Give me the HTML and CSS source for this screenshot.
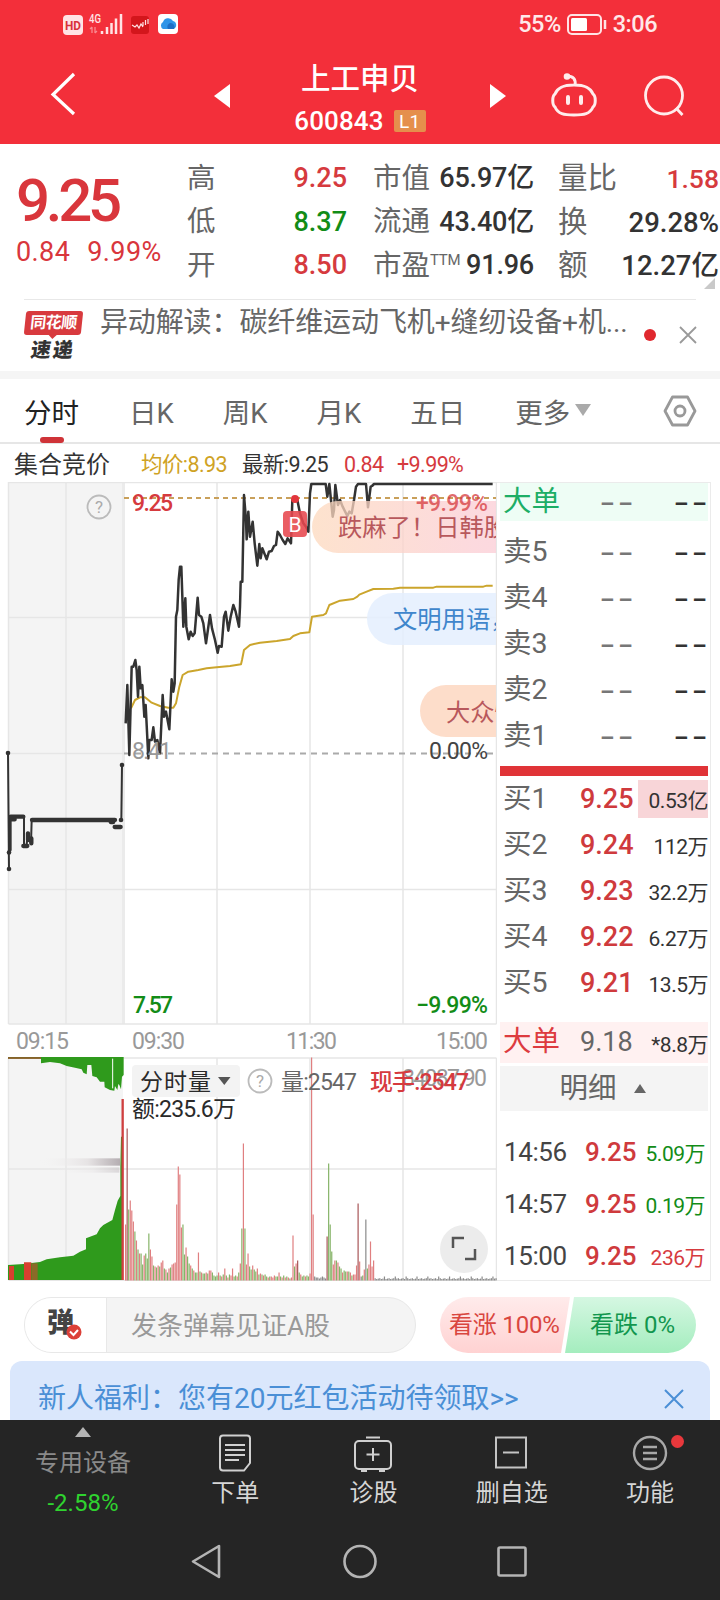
FILE: index.html
```html
<!DOCTYPE html>
<html lang="zh-CN">
<head>
    <meta charset="UTF-8">
    <meta name="viewport" content="width=device-width, initial-scale=1.0">
    <title>上工申贝 600843</title>
    <link rel="stylesheet" href="styles.css">
</head>
<body>
    <header class="top">
        <div class="status">
            <svg class="status-left" width="122" height="26" viewBox="60 11 122 26">
                <rect x="63" y="15" width="20" height="20" rx="4" fill="#ffe3e5"/>
                <text x="65" y="30" font-size="13" font-weight="700" fill="#d9303a" textLength="16" lengthAdjust="spacingAndGlyphs">HD</text>
                <text x="89" y="23" font-size="12" font-weight="500" fill="#ffe3e5" textLength="12" lengthAdjust="spacingAndGlyphs">4G</text>
                <path d="M92 27v6m-2-4l2-2m3 0v6m0 0l2-2" stroke="#f98a90" stroke-width="1.3" fill="none"/>
                <path d="M102 31v3M107 27v7M111.500 23v11M116 18.500v15.500M121 14v20" stroke="#ffe3e5" stroke-width="2.500"/>
                <rect x="131" y="16" width="18" height="18" rx="3" fill="#d3161c"/>
                <path d="M132 25l3 2 2-2 2 3 2-4 2 3M143 26v-4M145.500 25v-5M148 24v-5" stroke="#ffe3e5" stroke-width="1.200" fill="none"/>
                <rect x="158" y="14" width="20" height="20" rx="4" fill="#fff"/>
                <path d="M163 29a4 4 0 0 1 0-7 5.500 5.500 0 0 1 10-1 4.200 4.200 0 0 1 .5 8z" fill="#2f95e8"/>
                <path d="M168 29a4 4 0 0 1 2-6 4 4 0 0 1 4 6z" fill="#1d6fc6"/>
            </svg>
            <div class="status-right">
                <span>55%</span>
                <svg width="42" height="24" viewBox="0 0 42 24">
                    <rect x="2" y="2" width="33" height="19" rx="4" fill="none" stroke="#ffe3e5" stroke-width="2"/>
                    <rect x="5" y="5" width="16" height="13" rx="1.500" fill="#fff"/>
                    <path d="M39 7v9" stroke="#ffe3e5" stroke-width="2.500"/>
                </svg>
                <span>3:06</span>
            </div>
        </div>
        <div class="titlebar">
            <svg class="back" width="30" height="48" viewBox="0 0 30 48"><path d="M25 4L4 24.500 25 44" fill="none" stroke="#fff" stroke-width="3.200"/></svg>
            <svg class="prev" width="16" height="24" viewBox="0 0 16 24"><path d="M16 0v24L0 12z" fill="#fff"/></svg>
            <div class="stock">
                <h1>上工申贝</h1>
                <p>600843 <span class="level">L1</span></p>
            </div>
            <svg class="next" width="16" height="24" viewBox="0 0 16 24"><path d="M0 0v24l16-12z" fill="#fff"/></svg>
            <svg class="robot" width="50" height="48" viewBox="0 0 50 48" fill="none" stroke="#ffecec" stroke-width="3">
                <path d="M25 15c13 0 17 4 19 9 3 2 3 11 0 13-3 7-9 8-19 8s-16-1-19-8c-3-2-3-11 0-13 2-5 6-9 19-9zM26 15c1-6-2-9-8-9"/>
                <circle cx="18" cy="6.500" r="1.800" fill="#ffecec"/>
                <path d="M19 27v6M32 27v6" stroke-width="4" stroke-linecap="round"/>
            </svg>
            <svg class="search" width="44" height="48" viewBox="0 0 44 48" fill="none" stroke="#ffecec" stroke-width="2.800"><circle cx="22" cy="25.500" r="18.500"/><path d="M34 38l6.500 7"/></svg>
        </div>
    </header>

    <section class="quote">
        <div class="price">
            <strong>9.25</strong>
            <p><span>0.84</span><span>9.99%</span></p>
        </div>
        <dl class="col col-a">
            <div><dt>高</dt><dd class="up">9.25</dd></div>
            <div><dt>低</dt><dd class="down">8.37</dd></div>
            <div><dt>开</dt><dd class="up">8.50</dd></div>
        </dl>
        <dl class="col col-b">
            <div><dt>市值</dt><dd>65.97亿</dd></div>
            <div><dt>流通</dt><dd>43.40亿</dd></div>
            <div><dt>市盈<sup>TTM</sup></dt><dd>91.96</dd></div>
        </dl>
        <dl class="col col-c">
            <div><dt>量比</dt><dd class="up">1.58</dd></div>
            <div><dt>换</dt><dd>29.28%</dd></div>
            <div><dt>额</dt><dd>12.27亿</dd></div>
        </dl>
        <i class="corner"></i>
    </section>

    <section class="news">
        <div class="logo">
            <span class="logo-top">同花顺</span>
            <span class="logo-bottom">速递</span>
        </div>
        <p>异动解读：碳纤维运动飞机+缝纫设备+机...</p>
        <i class="dot"></i>
        <svg width="18" height="18" viewBox="0 0 18 18"><path d="M1 1l16 16M17 1L1 17" stroke="#999" stroke-width="1.800"/></svg>
    </section>

    <nav class="tabs">
        <a class="active">分时</a>
        <a>日K</a>
        <a>周K</a>
        <a>月K</a>
        <a>五日</a>
        <a class="more">更多<i></i></a>
        <svg width="34" height="34" viewBox="0 0 34 34" fill="none" stroke="#999" stroke-width="2.800"><path d="M9.500 3h15L32 17l-7.500 14h-15L2 17z" stroke-linejoin="round"/><circle cx="17" cy="17" r="5"/></svg>
    </nav>

    <div class="summary">
        <b>集合竞价</b>
        <span class="avg">均价:8.93</span>
        <span class="last">最新:9.25</span>
        <span class="up chg">0.84</span>
        <span class="up">+9.99%</span>
    </div>

    <main class="board">
        <svg class="chart" width="497" height="799" viewBox="0 482 497 799">
            <defs>
                <linearGradient id="warm"><stop offset="0" stop-color="#fdd9bd"/><stop offset=".7" stop-color="#fbcdd3"/><stop offset="1" stop-color="#fbc9d8"/></linearGradient>
                <linearGradient id="trail"><stop offset="0" stop-color="#f3f3f3" stop-opacity="0"/><stop offset=".6" stop-color="#e6e3e4"/><stop offset="1" stop-color="#b5aeb2"/></linearGradient>
                <clipPath id="plot"><rect x="0" y="482" width="496" height="799"/></clipPath>
            </defs>

            <!-- grid -->
            <rect x="8" y="482" width="115" height="542" fill="#f4f4f4"/>
            <rect x="8" y="1058" width="115" height="222" fill="#f4f4f4"/>
            <rect x="122" y="482" width="3" height="542" fill="#ebebeb"/>
            <path d="M8.500 482.500h488M8.500 617.500h488M8.500 753.500h115M8.500 889.500h488M8.500 1024h488M8.500 1058h488M8.500 1169h488M8.500 1280.500h488
                     M8.500 482v542M66 482v542M217 482v542M310 482v542M403 482v542M496.500 482v542
                     M8.500 1058v222M66 1058v222M217 1058v222M310 1058v222M403 1058v222M496.500 1058v222" stroke="#e6e6e6" stroke-width="1.500" fill="none"/>
            <path d="M124 498h372" stroke="#c9a05a" stroke-width="1.800" stroke-dasharray="5 4"/>
            <path d="M124 753.500h372" stroke="#aaa" stroke-width="1.800" stroke-dasharray="6 5"/>

            <!-- auction price -->
            <g transform="translate(0 470) scale(.33333)" fill="none" stroke="#333" stroke-linejoin="round" stroke-linecap="round">
                <path stroke-width="6" d="M24 848L27 1197M72 1040V1128M80 1125L83 1088 93 1122 95 1050M364 1050L366 885"/>
                <path stroke-width="10" d="M30 1045V1140"/>
                <path stroke-width="13" d="M32 1040H70M34 1048H44M96 1050H345M332 1056H340M344 1071H362M70 1128H82M84 1090V1110M94 1105V1120"/>
            </g>
            <g fill="#333"><circle cx="8" cy="753" r="2.300"/><circle cx="9" cy="852.500" r="2.300"/><circle cx="9" cy="869" r="2.300"/><circle cx="122" cy="765" r="2.300"/><circle cx="121" cy="820" r="2.300"/></g>

            <!-- average and price lines -->
            <g transform="translate(120 470) scale(.33333)" fill="none" stroke-linejoin="round">
                <path stroke="#cba52c" stroke-width="6" d="M33 715L45 690 60 682 75 682 95 698 120 708 145 713 160 713 168 700 178 650 188 615 205 605 235 600 260 595 290 592 330 588 363 583 366 570 372 540 390 525 420 518 470 513 510 507 520 498 540 490 568 487 571 470 576 440 610 435 618 430 628 405 660 392 700 387 712 380 718 374 740 365 760 357 820 356 840 353 940 353 950 350 1090 350 1100 347 1118 347"/>
                <path stroke="#333" stroke-width="7.500" d="M17 760L22 645 28 855 35 590 40 590 46 570 50 600 54 680 58 590 62 655 67 645 73 740 77 705 85 865 88 810 95 810 100 772 105 815 112 810 120 850 128 675 132 740 138 725 148 778 155 628 160 665 164 640 168 440 172 420 176 330 180 290 184 290 190 470 196 385 199 470 206 508 212 485 218 498 224 490 233 383 237 435 244 440 250 460 258 520 270 435 276 475 285 510 293 548 297 528 305 530 312 440 317 425 325 482 332 440 340 405 347 425 357 470 360 410 362 335 367 335 372 75 378 150 380 208 385 125 390 200 398 155 404 220 412 287 418 222 422 265 427 235 440 268 447 245 455 243 462 228 468 225 473 185 480 195 488 210 496 222 503 205 513 220 517 90 532 90 540 130 550 160 558 170 565 185 570 70 574 42 617 42 622 80 628 42 634 100 638 140 642 120 646 45 654 105 660 90 668 110 682 138 688 125 695 130 702 90 708 50 714 42 738 42 744 112 752 50 756 48 762 42 1118 42"/>
            </g>
            <circle cx="295" cy="499" r="4" fill="#e2353c"/>
            <rect x="283" y="511" width="24" height="26" rx="4" fill="#e7474d" fill-opacity=".88"/>
            <text x="295" y="532" class="mark">B</text>

            <text x="132" y="511" class="t up" textLength="41">9.25</text>
            <text x="132" y="759" class="t muted" textLength="40">8.41</text>
            <text x="133" y="1013" class="t down" textLength="40">7.57</text>
            <text x="429" y="759" class="t dark" textLength="59">0.00%</text>
            <text x="416" y="1013" class="t down" textLength="72">−9.99%</text>

            <!-- bullet comments -->
            <g clip-path="url(#plot)">
                <rect x="312" y="501" width="230" height="52" rx="26" fill="url(#warm)" fill-opacity=".75"/>
                <text x="338" y="536" class="bullet warm">跌麻了！日韩股</text>
                <rect x="367" y="593" width="200" height="52" rx="26" fill="#e4eefe" fill-opacity=".85"/>
                <text x="393" y="628" class="bullet cool">文明用语，</text>
                <rect x="420" y="685" width="200" height="52" rx="26" fill="#fdd9c4" fill-opacity=".9"/>
                <text x="446" y="721" class="bullet warm">大众快</text>
            </g>
            <text x="416" y="511" class="t up" textLength="72" opacity=".75">+9.99%</text>

            <g fill="none" stroke="#bbb" stroke-width="1.800"><circle cx="99" cy="507" r="11.500"/><circle cx="260" cy="1081" r="11.500"/></g>
            <text x="99" y="513" class="hint">?</text>

            <text x="16" y="1049" class="t muted" textLength="53">09:15</text>
            <text x="132" y="1049" class="t muted" textLength="53">09:30</text>
            <text x="286" y="1049" class="t muted" textLength="51">11:30</text>
            <text x="436" y="1049" class="t muted" textLength="52">15:00</text>

            <!-- auction volume -->
            <g transform="translate(0 980) scale(.33333)">
                <rect x="120" y="535" width="240" height="22" fill="url(#trail)"/>
                <rect x="160" y="562" width="198" height="16" fill="url(#trail)" opacity=".4"/>
                <path fill="#2f9a1c" d="M24 900V855L70 852 120 846 140 838 180 832 220 827 240 815 258 808 258 775 290 763 300 745 310 735 337 720 345 690 353 662 361 648 361 560 363 470 367 470V900z"/>
                <path fill="#d8402f" d="M27 858H42V900H27zM72 847H94V900H72z"/>
                <path fill="#8a6a28" d="M96 850H113V900H96z"/>
                <path fill="#2f9a1c" d="M24 231H371V285L366 290 363 328 358 315 355 312 352 330 345 318 343 332 330 330 314 322 313 305 300 305 290 292 277 288 274 255 262 255 260 283 250 278 245 268 225 263 200 258 180 250 150 246 123 250V236H24z"/>
                <path d="M24 234H123" stroke="#a0522d" stroke-width="4"/>
                <path d="M338 236V325" stroke="#fff" stroke-width="3"/>
                <path d="M368 357V900" stroke="#cf4040" stroke-width="7"/>
            </g>

            <g id="volume"></g>

            <rect x="132" y="1065" width="108" height="32" rx="4" fill="#f3f3f3"/>
            <text x="140" y="1090" class="t black" textLength="71">分时量</text>
            <path d="M218 1077h12.500l-6.200 8z" fill="#555"/>
            <text x="260" y="1087" class="hint">?</text>
            <text x="281" y="1090" class="t gray" textLength="76">量:2547</text>
            <text x="402" y="1086" class="t muted" textLength="85">84087.90</text>
            <text x="370" y="1090" class="t up" textLength="99">现手:2547</text>
            <text x="132" y="1117" class="t black" textLength="104">额:235.6万</text>

            <circle cx="464" cy="1249" r="24" fill="#ececec"/>
            <path d="M453 1248v-10h11M465 1259h10v-10" fill="none" stroke="#555" stroke-width="2.500"/>
        </svg>

        <aside class="book">
            <div class="row big sell"><span>大单</span><em>––</em><em class="strong">––</em></div>
            <div class="sells">
                <div class="row"><span>卖5</span><em>––</em><em class="strong">––</em></div>
                <div class="row"><span>卖4</span><em>––</em><em class="strong">––</em></div>
                <div class="row"><span>卖3</span><em>––</em><em class="strong">––</em></div>
                <div class="row"><span>卖2</span><em>––</em><em class="strong">––</em></div>
                <div class="row"><span>卖1</span><em>––</em><em class="strong">––</em></div>
            </div>
            <div class="ratio"></div>
            <div class="buys">
                <div class="row"><span>买1</span><b>9.25</b><small class="hot">0.53亿</small></div>
                <div class="row"><span>买2</span><b>9.24</b><small>112万</small></div>
                <div class="row"><span>买3</span><b>9.23</b><small>32.2万</small></div>
                <div class="row"><span>买4</span><b>9.22</b><small>6.27万</small></div>
                <div class="row"><span>买5</span><b>9.21</b><small>13.5万</small></div>
            </div>
            <div class="row big buy"><span>大单</span><b>9.18</b><small>*8.8万</small></div>
            <div class="detail">明细<i></i></div>
            <div class="ticks">
                <div class="row"><time>14:56</time><b>9.25</b><small class="down">5.09万</small></div>
                <div class="row"><time>14:57</time><b>9.25</b><small class="down">0.19万</small></div>
                <div class="row"><time>15:00</time><b>9.25</b><small class="up">236万</small></div>
            </div>
        </aside>
    </main>

    <section class="actions">
        <div class="comment">
            <div class="toggle">弹
                <svg class="check" width="16" height="16" viewBox="0 0 16 16"><circle cx="8" cy="8" r="7.500" fill="#dc4038"/><path d="M4 7.500l3.500 3.500 4.500-5" fill="none" stroke="#fff" stroke-width="2"/></svg>
            </div>
            <div class="field">发条弹幕见证A股</div>
        </div>
        <div class="vote">
            <div class="bull">看涨 100%</div>
            <div class="bear">看跌 0%</div>
        </div>
    </section>

    <section class="banner">
        <p>新人福利：您有20元红包活动待领取&gt;&gt;</p>
        <svg width="20" height="20" viewBox="0 0 20 20"><path d="M1 1l18 18M19 1L1 19" stroke="#4a8fd6" stroke-width="2"/></svg>
    </section>

    <footer class="bottom">
        <div class="menu">
            <div class="index">
                <i></i>
                <span>专用设备</span>
                <em>-2.58%</em>
            </div>
            <div class="item">
                <svg width="40" height="40" viewBox="0 0 40 40" fill="none" stroke="#d0d0d0" stroke-width="2"><path d="M8 2.500h24q3 0 3 3V30l-6 7.500H8q-3 0-3-3v-29q0-3 3-3z"/><path d="M10 12h20M10 17h20M10 22h20M10 27h14"/></svg>
                <span>下单</span>
            </div>
            <div class="item">
                <svg width="40" height="40" viewBox="0 0 40 40" fill="none" stroke="#d0d0d0" stroke-width="2"><rect x="2" y="8" width="36" height="28" rx="4"/><path d="M13 4.500h14M20 15v13M13.500 21.500h13"/><path d="M8 37.500h6M26 37.500h6" stroke-width="3"/></svg>
                <span>诊股</span>
            </div>
            <div class="item">
                <svg width="40" height="40" viewBox="0 0 40 40" fill="none" stroke="#c4c4c4" stroke-width="2"><rect x="4" y="4.500" width="30" height="30"/><path d="M11 19.500h16"/></svg>
                <span>删自选</span>
            </div>
            <div class="item">
                <svg width="40" height="40" viewBox="0 0 40 40" fill="none" stroke="#a8a8a8" stroke-width="2.400"><circle cx="20" cy="20" r="16"/><path d="M13 14h14M13 20h14M13 26h14"/></svg>
                <span>功能</span>
                <i class="badge"></i>
            </div>
        </div>
        <svg class="keys" width="720" height="40" viewBox="0 0 720 40" fill="none" stroke="#b4b4b4" stroke-width="2.600" stroke-linejoin="round">
            <path d="M219 5v31L193 20.500z"/>
            <circle cx="360" cy="20.500" r="15.500"/>
            <rect x="498.500" y="6.500" width="27" height="28" rx="1.500"/>
        </svg>
    </footer>
    <script src="script.js"></script>
</body>
</html>
```
FILE: styles.css
```css
* {
    box-sizing: border-box;
}
body {
    width: 720px;
    height: 1600px;
    margin: 0;
    overflow: hidden;
    background: #fff;
    color: #333;
    font-family: Roboto, "Noto Sans CJK SC", sans-serif;
    line-height: 1;
}
h1, p, dl, dd {
    margin: 0;
}
i, em {
    font-style: normal;
}
svg {
    display: block;
    flex: none;
}
.up {
    color: #d63a3e;
    fill: #d63a3e;
}
.down {
    color: #128c17;
    fill: #128c17;
}

/* header */
.top {
    height: 144px;
    background: #f32f3a;
    color: #fff;
}
.status {
    display: flex;
    justify-content: space-between;
    align-items: center;
    height: 48px;
    padding: 0 63px 0 60px;
}
.status-right {
    display: flex;
    align-items: center;
    gap: 5px;
    padding-top: 2px;
    color: #ffe8e9;
    font-size: 23.5px;
    font-weight: 500;
    letter-spacing: -0.5px;
}
.titlebar {
    display: flex;
    align-items: center;
    height: 96px;
    padding: 0 33px 4px 49px;
}
.back {
    margin-right: 135px;
}
.prev, .next {
    margin-top: 4px;
}
.stock {
    width: 260px;
    padding-top: 9px;
    text-align: center;
}
.stock h1 {
    padding-top: 2px;
    font-size: 29.5px;
    font-weight: 500;
}
.stock p {
    display: flex;
    justify-content: center;
    align-items: center;
    gap: 10px;
    margin-top: 13px;
    font-size: 26px;
    font-weight: 500;
    letter-spacing: 0.1px;
}
.level {
    width: 32px;
    height: 22px;
    border-radius: 2px;
    background: #e58f4c;
    font-size: 19px;
    font-weight: 400;
    line-height: 23px;
}
.robot {
    margin-left: 43px;
}
.search {
    margin-left: 43px;
}

/* quote */
.quote {
    position: relative;
    display: flex;
    height: 155px;
    padding: 13px 1px 0 16px;
}
.price {
    width: 171px;
    color: #d9363c;
}
.price strong {
    display: block;
    margin-top: 14px;
    font-size: 60px;
    font-weight: 500;
    letter-spacing: -4.3px;
}
.price p {
    display: flex;
    gap: 17px;
    margin-top: 8px;
    font-size: 27px;
    letter-spacing: 0.4px;
}
.col > div {
    display: flex;
    justify-content: space-between;
    align-items: center;
    height: 43.5px;
}
.col dt {
    color: #666;
    font-size: 28.5px;
    white-space: nowrap;
}
.col dd {
    font-size: 27px;
    font-weight: 500;
    white-space: nowrap;
}
.col sup {
    font-size: 15px;
    letter-spacing: -0.3px;
    line-height: 0;
}
.col-a {
    width: 160px;
}
.col-b {
    width: 161px;
    margin-left: 26px;
}
.col-c {
    width: 161px;
    margin-left: 24px;
}
.col-b dd {
    letter-spacing: -0.2px;
}
.col-c dt {
    font-size: 29.5px;
}
.col-c dd {
    font-size: 27.5px;
}
.col-c .up {
    font-size: 26.5px;
}
.corner {
    position: absolute;
    right: 5px;
    bottom: 10px;
    border-left: 11px solid transparent;
    border-bottom: 11px solid #c9c9c9;
}

/* news */
.news {
    display: flex;
    height: 80px;
    padding: 0 23px 0 24px;
    border-bottom: 8px solid #f5f5f5;
    background: linear-gradient(#e8e8e8, #e8e8e8) 24px 0 / 672px 1px no-repeat;
}
.logo {
    width: 60px;
    padding: 12px 0 0 1px;
}
.logo-top {
    position: relative;
    display: block;
    width: 57px;
    height: 24px;
    border-radius: 3px;
    background: #d83a3e;
    color: #fff;
    font-size: 16px;
    font-weight: 700;
    letter-spacing: -0.5px;
    line-height: 24px;
    text-align: center;
    transform: skewX(-6deg);
}
.logo-top::after {
    content: "";
    position: absolute;
    left: 25px;
    top: 24px;
    border: 4px solid transparent;
    border-top-color: #d83a3e;
    border-bottom: 0;
}
.logo-bottom {
    display: block;
    margin-top: 5px;
    padding-left: 6px;
    font-size: 20px;
    font-weight: 900;
    letter-spacing: 2px;
    transform: skewX(-8deg);
}
.news p {
    width: 546px;
    padding: 10px 0 0 16px;
    color: #666;
    font-size: 28px;
    letter-spacing: -0.1px;
    white-space: nowrap;
}
.dot {
    width: 12px;
    height: 12px;
    margin: 30px 23px 0 15px;
    border-radius: 50%;
    background: #e0282e;
}
.news svg {
    margin-top: 27px;
}

/* tabs */
.tabs {
    display: flex;
    align-items: center;
    height: 65px;
    padding: 0 23px 0 24px;
    border-bottom: 2px solid #e6e6e6;
    color: #666;
    font-size: 27.5px;
}
.tabs a {
    position: relative;
    height: 64px;
    margin-right: 49px;
    line-height: 69px;
    white-space: nowrap;
}
.tabs .active {
    margin-right: 50px;
    color: #222;
}
.active::after {
    content: "";
    position: absolute;
    left: 16px;
    bottom: 0;
    width: 24px;
    height: 6px;
    border-radius: 3px;
    background: #cf3338;
}
.tabs .more {
    display: flex;
    align-items: center;
    margin-left: 1px;
    margin-right: auto;
    padding-top: 5px;
}
.more i {
    margin: 0 0 6px 5px;
    border: 8px solid transparent;
    border-top: 12px solid #aaa;
    border-bottom: 0;
}

/* summary line */
.summary {
    display: flex;
    align-items: center;
    height: 38px;
    padding-left: 14px;
    padding-top: 3px;
    font-size: 21.5px;
    letter-spacing: -0.6px;
}
.summary b {
    width: 127px;
    font-size: 24px;
    font-weight: 400;
    letter-spacing: 0;
}
.summary .avg {
    width: 101px;
    color: #cfa224;
}
.summary .last {
    width: 102px;
}
.summary .chg {
    width: 53px;
}

/* chart */
.board {
    display: flex;
    height: 799px;
}
.t {
    font-size: 23px;
}
.t.up, .t.down {
    font-weight: 500;
}
.muted {
    fill: #999;
}
.dark {
    fill: #444;
}
.gray {
    fill: #666;
}
.black {
    fill: #2a2a2a;
}
.mark {
    fill: #fff;
    font-size: 21px;
    text-anchor: middle;
}
.hint {
    fill: #aaa;
    font-size: 17px;
    text-anchor: middle;
}
.bullet {
    font-size: 24.3px;
}
.warm {
    fill: #b8585c;
}
.cool {
    fill: #3f86cc;
}

/* order book */
.book {
    width: 214px;
    padding: 0 2px 0 3px;
    border: 1px solid #ebebeb;
    border-left: 0;
}
.row {
    display: flex;
    align-items: center;
    height: 46px;
    padding-left: 3px;
    white-space: nowrap;
}
.row span {
    flex: none;
    width: 77px;
    color: #666;
    font-size: 28.5px;
}
.row em {
    flex: none;
    width: 74px;
    padding-left: 21px;
    color: #777;
    font-family: "Liberation Sans", sans-serif;
    font-size: 23px;
    font-weight: 700;
    letter-spacing: 5.5px;
}
.row .strong {
    width: 54px;
    color: #333;
}
.row b {
    width: 58px;
    color: #cf3a3d;
    font-size: 27px;
    font-weight: 500;
}
.row small {
    flex: 1;
    height: 38px;
    font-size: 21px;
    letter-spacing: -0.5px;
    line-height: 42px;
    text-align: right;
}
.row .hot {
    background: #f8d5d8;
}
.big {
    height: 38px;
}
.sell {
    padding-top: 1px;
    background: #eefdf5;
}
.sell span {
    color: #1dae66;
}
.sells {
    padding-top: 8px;
}
.ratio {
    height: 10px;
    margin-top: 7px;
    background: #e03337;
}
.buys {
    margin-bottom: 16px;
}
.buy {
    height: 41px;
    background: #fff1f1;
}
.buy span {
    color: #dd3b3f;
}
.buy b {
    color: #666;
    font-weight: 400;
}
.detail {
    display: flex;
    justify-content: center;
    align-items: center;
    gap: 17px;
    height: 45px;
    margin-top: 3px;
    padding: 2px 3px 0 0;
    background: #f4f4f4;
    color: #666;
    font-size: 28.5px;
}
.detail i {
    margin-bottom: 3px;
    border: 6px solid transparent;
    border-top: 0;
    border-bottom: 9px solid #666;
}
.ticks {
    padding-top: 15px;
}
.ticks .row {
    height: 52px;
    padding: 0 3px 0 4px;
}
.ticks time {
    width: 81px;
    color: #444;
    font-size: 26px;
    letter-spacing: -0.4px;
}
.ticks b {
    font-size: 26px;
}

/* comment and vote */
.actions {
    display: flex;
    justify-content: space-between;
    padding: 16px 24px 8px;
}
.comment {
    display: flex;
    width: 392px;
    height: 56px;
    overflow: hidden;
    border: 1px solid #e8e8e8;
    border-radius: 28px;
    background: #f4f4f4;
}
.toggle {
    position: relative;
    width: 82px;
    padding: 12px 0 0 22px;
    border-right: 1px solid #e8e8e8;
    background: #fff;
    color: #444;
    font-size: 27px;
    font-weight: 900;
}
.check {
    position: absolute;
    left: 41px;
    top: 26px;
}
.field {
    padding-left: 24px;
    color: #999;
    font-size: 26px;
    line-height: 57px;
}
.vote {
    display: flex;
    width: 256px;
    height: 56px;
    overflow: hidden;
    border-radius: 28px;
    font-size: 24px;
    line-height: 57px;
}
.bull {
    width: 130px;
    padding-left: 9px;
    background: linear-gradient(#ffebeb, #ffd2d2);
    clip-path: polygon(0 0, 100% 0, 121px 100%, 0 100%);
    color: #d9463f;
    letter-spacing: -0.2px;
    white-space: nowrap;
}
.bear {
    width: 132px;
    margin-left: -6px;
    padding-left: 26px;
    background: linear-gradient(#d5f7e2, #a4edbe);
    clip-path: polygon(10px 0, 100% 0, 100% 100%, 1px 100%);
    color: #12964e;
}

/* banner */
.banner {
    display: flex;
    justify-content: space-between;
    align-items: center;
    height: 59px;
    margin: 0 10px;
    padding: 16px 26px 0 28px;
    border-radius: 12px 12px 0 0;
    background: #dae7fc;
    color: #4a8fd6;
    font-size: 28px;
    white-space: nowrap;
}

/* bottom bars */
.bottom {
    height: 180px;
    background: #252525;
}
.menu {
    display: flex;
    height: 121px;
    color: #d6d6d6;
    font-size: 24px;
}
.index {
    display: flex;
    flex-direction: column;
    align-items: center;
    width: 166px;
    padding-top: 7px;
    color: #8a8a8a;
}
.index i {
    border: 8px solid transparent;
    border-top: 0;
    border-bottom: 10px solid #b4b4b4;
}
.index span {
    margin-top: 14px;
}
.index em {
    margin-top: 16px;
    color: #2fd32f;
}
.item {
    position: relative;
    display: flex;
    flex-direction: column;
    align-items: center;
    gap: 8px;
    width: 138.3px;
    padding-top: 13px;
}
.badge {
    position: absolute;
    right: 35px;
    top: 15px;
    width: 13px;
    height: 13px;
    border-radius: 50%;
    background: #e8383c;
}
```
FILE: script.js
```js
// one entry per trading minute: colour letter + bar height in px
const minutes = `r56 n152 g71 r80 r70 r59 g49 r40 g31 r27 g27 g16 r25 g27 g22 g47 r31 r24 g15 r14
g13 r15 g14 r18 r20 g12 r11 g8 r12 g13 r16 r17 r18 r76 r114 r106 r53 g56 g26 r33
g24 g17 r15 g12 r10 g8 g8 r28 g9 r8 g7 g7 r8 g7 r10 r10 g8 g5 g4 g5
r8 g5 r4 g6 r12 g5 r3 g6 r5 r12 g4 g5 r4 g8 r17 g52 r137 g52 r16 r27
g14 g11 r15 g11 g9 r12 g6 r7 g6 r5 g6 g4 r3 g4 r4 r3 r5 g4 g4 r8
g4 r3 g5 r3 g4 r3 g2 r3 r45 g14 r17 n20 g8 r6 g4 g5 r4 g5 g4 r7
r223 r66 k4 k3 k3 k2 k3 k4 k3 k2 n44 g117 g56 g29 r16 r20 g20 r18 g14 g12
r8 g10 g9 r9 g9 r8 g5 r6 r6 r15 n77 r19 k4 g5 r11 k61 g12 r16 r39 r14
r20`.trim().split(/\s+/);

const colors = { r: '#e07f80', g: '#86b468', n: '#a85658', k: '#8a8a8a' };
const base = 1280.5;
let bars = '';

for (let i = 0; i < 240; i++) {
    const bar = minutes[i] || 'k' + (i % 7 === 6 ? 4 : 1.5 + (i % 3) * 0.4);
    const height = Math.min(parseFloat(bar.slice(1)), 223);
    const x = 125 + i * 1.55;
    bars += `<rect x="${x.toFixed(2)}" y="${base - height}" width="1.2" height="${height}" fill="${colors[bar[0]]}"/>`;
}
document.getElementById('volume').innerHTML = bars;
```
